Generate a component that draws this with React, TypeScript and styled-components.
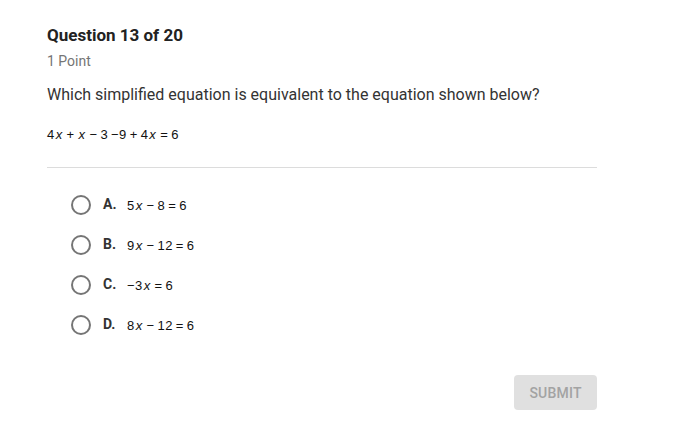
import React from 'react';
import styled, { createGlobalStyle } from 'styled-components';

const GlobalStyle = createGlobalStyle`
  body {
    margin: 0;
    background: #ffffff;
    font-family: Roboto, 'Liberation Sans', sans-serif;
  }
`;

const Page = styled.div`
  width: 550px;
  padding: 25px 0 0 47px;
`;

const Title = styled.h1`
  margin: 0;
  font-size: 17px;
  line-height: 21px;
  font-weight: 700;
  color: #222;
`;

const Points = styled.div`
  margin-top: 5px;
  font-size: 14px;
  line-height: 20px;
  color: #757575;
`;

const Prompt = styled.p`
  margin: 14px 0 0;
  font-size: 16px;
  line-height: 20px;
  color: #333;
`;

const Math = styled.span`
  font-family: 'Liberation Sans', Arial, sans-serif;
  font-size: 13px;
  color: #111;
  white-space: pre;
  letter-spacing: 0.4px;
`;

const Var = styled.i`
  font-style: italic;
  margin: 0 1px;
`;

const EquationLine = styled.div`
  margin-top: 19px;
  line-height: 20px;
`;

const Divider = styled.hr`
  margin: 22px 0 0;
  border: none;
  border-top: 1px solid #dcdcdc;
`;

const Options = styled.div`
  display: flex;
  flex-direction: column;
  gap: 20px;
  margin-top: 27px;
  padding-left: 24px;
`;

const Option = styled.label`
  display: flex;
  align-items: center;
  height: 20px;
  cursor: pointer;
`;

const Radio = styled.span`
  box-sizing: border-box;
  width: 20px;
  height: 20px;
  border: 2px solid #757575;
  border-radius: 50%;
  margin-right: 12px;
`;

const Letter = styled.span`
  width: 24px;
  font-size: 14px;
  font-weight: 700;
  color: #333;
  margin-top: -3px;
`;

const Footer = styled.div`
  display: flex;
  justify-content: flex-end;
  margin-top: 40px;
`;

const SubmitButton = styled.button`
  width: 83px;
  height: 35px;
  border: none;
  border-radius: 4px;
  background: #e0e0e0;
  color: #a3a3a3;
  font-family: Roboto, 'Liberation Sans', sans-serif;
  font-size: 14px;
  font-weight: 500;
  letter-spacing: 0.2px;
`;

// parts: strings are plain text, { v } is a variable drawn in italics
type Part = string | { v: string };

const Expr: React.FC<{ parts: Part[] }> = ({ parts }) => (
  <Math>
    {parts.map((p, i) => (typeof p === 'string' ? <span key={i}>{p}</span> : <Var key={i}>{p.v}</Var>))}
  </Math>
);

const x = { v: 'x' };
const sp = '\u2009';

const options: { letter: string; parts: Part[] }[] = [
  { letter: 'A.', parts: ['5', x, `${sp}\u2212${sp}8${sp}=${sp}6`] },
  { letter: 'B.', parts: ['9', x, `${sp}\u2212${sp}12${sp}=${sp}6`] },
  { letter: 'C.', parts: ['\u22123', x, `${sp}=${sp}6`] },
  { letter: 'D.', parts: ['8', x, `${sp}\u2212${sp}12${sp}=${sp}6`] },
];

export default function App() {
  return (
    <>
      <GlobalStyle />
      <Page>
        <Title>Question 13 of 20</Title>
        <Points>1 Point</Points>
        <Prompt>Which simplified equation is equivalent to the equation shown below?</Prompt>
        <EquationLine>
          <Expr
            parts={[
              '4',
              x,
              `${sp}+${sp}`,
              x,
              `${sp}\u2212${sp}3${sp}\u22129${sp}+${sp}4`,
              x,
              `${sp}=${sp}6`,
            ]}
          />
        </EquationLine>
        <Divider />
        <Options>
          {options.map((o) => (
            <Option key={o.letter}>
              <Radio />
              <Letter>{o.letter}</Letter>
              <Expr parts={o.parts} />
            </Option>
          ))}
        </Options>
        <Footer>
          <SubmitButton disabled>SUBMIT</SubmitButton>
        </Footer>
      </Page>
    </>
  );
}
